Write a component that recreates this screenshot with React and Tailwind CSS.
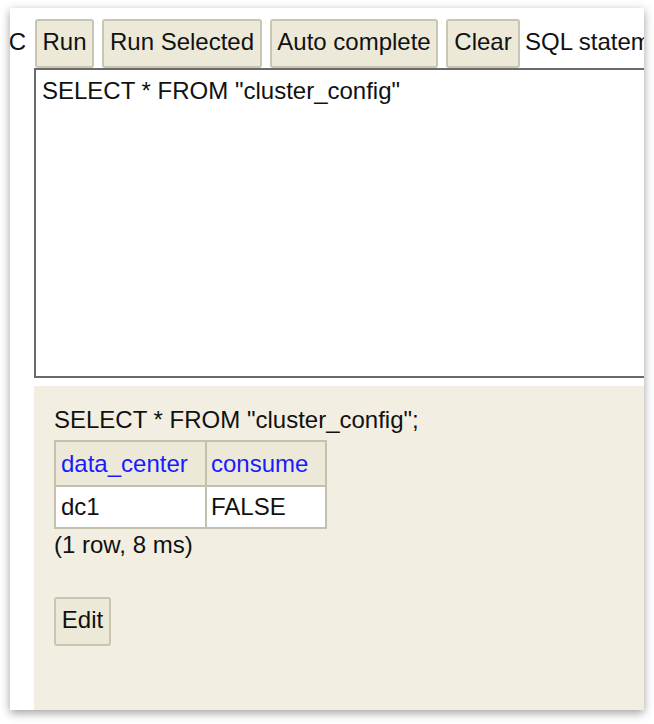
import React from "react";

const font = { fontFamily: '"Liberation Sans", Arial, Helvetica, sans-serif' };

function Btn({ children, className = "" }) {
  return (
    <div
      className={
        "shrink-0 flex items-center justify-center h-[49px] pb-[3px] bg-[#ece9d8] border-2 border-[#c9c5b3] rounded-[3px] text-[24px] text-[#111] leading-none whitespace-nowrap " +
        className
      }
    >
      {children}
    </div>
  );
}

export default function App() {
  return (
    <div className="w-[654px] h-[724px] bg-white pt-[8px] pl-[10px]" style={font}>
      <div className="w-[634px] h-[702px] bg-white overflow-hidden shadow-[0_3px_9px_rgba(0,0,0,0.38)] flex flex-col">
        <div className="flex items-end pt-[10px] h-[60px] whitespace-nowrap">
          <div className="shrink-0 w-[25px] overflow-hidden flex justify-end items-center h-[49px] pb-[3px] pr-[9px]">
            <span className="text-[24px] text-[#111] leading-none">C</span>
          </div>
          <div className="flex gap-[8px] items-center shrink-0">
            <Btn className="w-[59px]">Run</Btn>
            <Btn className="w-[160px]">Run Selected</Btn>
            <Btn className="w-[168px]">Auto complete</Btn>
            <Btn className="w-[74px]">Clear</Btn>
            <span className="shrink-0 text-[24px] text-[#111] leading-none -ml-[3px] pb-[3px]">SQL statement:</span>
          </div>
        </div>
        <div className="shrink-0 ml-[24px] w-[640px] h-[310px] border-2 border-[#6a6a6a] bg-white pt-[7px] pl-[6px] text-[24px] text-[#111] leading-[28px] whitespace-nowrap">
          SELECT * FROM "cluster_config"
        </div>
        <div className="ml-[24px] mt-[8px] flex-1 bg-[#f2efe2] pl-[20px] pt-[20px] text-[24px] text-[#111] leading-[28px]">
          <div className="whitespace-nowrap">SELECT * FROM "cluster_config";</div>
          <table className="mt-[6px] border-collapse">
            <tbody>
              <tr className="bg-[#ece9d8] h-[45px]">
                <td className="border-2 border-[#c4c0ae] w-[151px] px-[5px] text-[#1a1aff]">data_center</td>
                <td className="border-2 border-[#c4c0ae] w-[120px] px-[4px] text-[#1a1aff]">consume</td>
              </tr>
              <tr className="bg-white h-[42px]">
                <td className="border-2 border-[#c4c0ae] px-[5px]">dc1</td>
                <td className="border-2 border-[#c4c0ae] px-[4px]">FALSE</td>
              </tr>
            </tbody>
          </table>
          <div className="mt-[2px]">(1 row, 8 ms)</div>
          <div className="mt-[38px] flex">
            <Btn className="w-[57px] h-[48px]">Edit</Btn>
          </div>
        </div>
      </div>
    </div>
  );
}
